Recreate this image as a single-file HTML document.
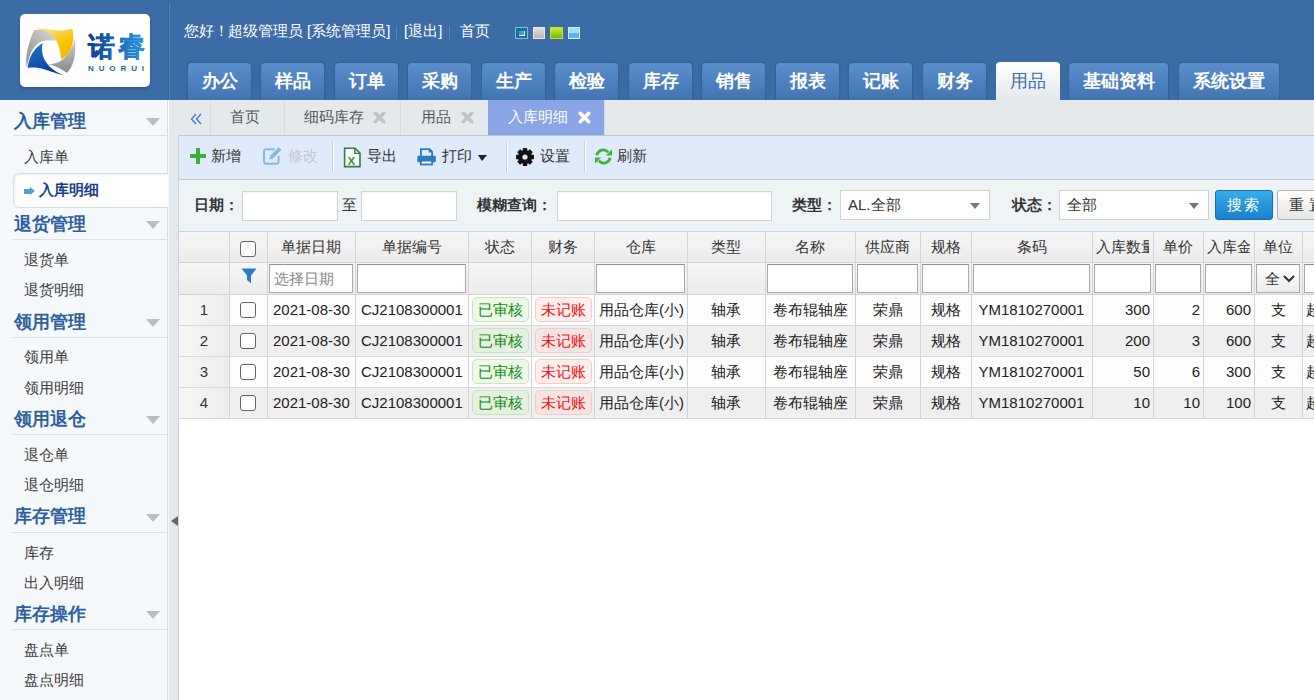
<!DOCTYPE html>
<html><head><meta charset="utf-8">
<style>
*{margin:0;padding:0;box-sizing:border-box;}
html,body{width:1314px;height:700px;overflow:hidden;font-family:"Liberation Sans",sans-serif;font-size:14px;color:#333;background:#fff;}
#hdr{position:absolute;left:0;top:0;width:1314px;height:100px;background:#3b6ca5;}
#logo{position:absolute;left:20px;top:14px;width:130px;height:73px;background:#fff;border-radius:5px;box-shadow:0 2px 3px rgba(20,40,80,.25);}
#vsep{position:absolute;left:168px;top:3px;width:2px;height:97px;border-left:1px solid #34659c;border-right:1px solid #5086c0;}
.gt{position:absolute;top:22px;color:#fff;font-size:15px;white-space:nowrap;line-height:18px;}
.gsep{position:absolute;top:26px;width:1px;height:14px;background:#5283bd;}
.sq{position:absolute;top:27px;width:12px;height:12px;}
.navt{position:absolute;top:63px;height:37px;border-radius:4px 4px 0 0;background:linear-gradient(#5a8fcc,#4174b0);color:#fff;font-weight:bold;font-size:18px;text-align:center;line-height:36px;box-shadow:0 0 2px rgba(10,30,70,.45);}
.navt.act{top:62px;height:38px;line-height:38px;background:linear-gradient(#fff,#e4e9ec);color:#3b6eaa;font-weight:normal;box-shadow:none;}
#side{position:absolute;left:0;top:100px;width:168px;height:600px;background:#f6f9fb;border-right:1px solid #d3dee6;}
.sh{position:absolute;left:14px;color:#2f609e;font-weight:bold;font-size:18px;line-height:20px;}
.sl{position:absolute;left:13px;width:155px;height:1px;background:#d7e2ea;}
.tri{position:absolute;left:146px;width:0;height:0;border-left:7px solid transparent;border-right:7px solid transparent;border-top:8px solid #b3c0c8;}
.si{position:absolute;left:24px;color:#3c3c3c;font-size:15px;line-height:18px;}
#selbox{position:absolute;left:13px;top:73px;width:160px;height:35px;background:#fff;border:1px solid #d5dfe8;border-radius:6px;box-shadow:inset 1px 1px 2px rgba(0,0,0,.08);}
.arr{position:absolute;left:10px;top:15px;width:6px;height:5px;background:#55a0d0;}
.arr:after{content:"";position:absolute;left:6px;top:-2px;border-left:5px solid #55a0d0;border-top:4.5px solid transparent;border-bottom:4.5px solid transparent;}
.selt{position:absolute;left:25px;top:7px;color:#1d3e8e;font-weight:bold;font-size:15px;line-height:18px;}
#split{position:absolute;left:168px;top:135px;width:11px;height:565px;background:#e2e8eb;border-left:1px solid #f2f6f8;border-right:1px solid #c8d5de;}
#splarr{position:absolute;left:171px;top:516px;border-right:7px solid #666;border-top:5.5px solid transparent;border-bottom:5.5px solid transparent;}
#tabbar{position:absolute;left:169px;top:100px;width:1145px;height:35px;background:#e4eaec;}
.tab{position:absolute;top:0;height:35px;line-height:34px;color:#555;font-size:15px;border-left:1px solid #d6dcdf;white-space:nowrap;}
.tab.act{background:#8aa6e6;color:#fff;border-left:none;}
.x{position:absolute;top:10.5px;width:13px;height:13px;line-height:0;}
#tool{position:absolute;left:179px;top:135px;width:1135px;height:45px;background:#dfeafb;border-top:1px solid #b9c9d9;border-bottom:1px solid #c8c8c8;}
.tt{position:absolute;top:11px;font-size:15px;line-height:18px;color:#333;white-space:nowrap;}
.tsep{position:absolute;top:6px;width:2px;height:30px;border-left:1px solid #c5cfd8;border-right:1px solid #fff;}
#srch{position:absolute;left:179px;top:180px;width:1135px;height:51px;background:#eef3f6;}
.lbl{position:absolute;top:196px;font-weight:bold;color:#333;font-size:15px;line-height:18px;white-space:nowrap;}
.inp{position:absolute;background:#fff;border:1px solid #cfd3d6;box-shadow:inset 0 1px 2px rgba(0,0,0,.06);}
.sel{position:absolute;top:190px;height:30px;background:#fff;border:1px solid #cfd3d6;font-size:15px;line-height:28px;padding-left:7px;color:#333;}
.sel:after{content:"";position:absolute;right:9px;top:12px;border-top:6px solid #777;border-left:5px solid transparent;border-right:5px solid transparent;}
.btn{position:absolute;top:190px;height:30px;border-radius:3px;font-size:15px;line-height:28px;text-align:center;letter-spacing:2px;}
#grid{position:absolute;left:179px;top:232px;width:1135px;height:468px;background:#fff;}
.hrow{position:absolute;left:0;height:31px;width:1135px;background:linear-gradient(#f7f7f7,#ebebeb);border-top:1px solid #d9dde0;}
.c{position:absolute;top:0;height:100%;border-right:1px solid #d4d4d4;font-size:15px;white-space:nowrap;overflow:hidden;text-align:center;}
.row{position:absolute;left:0;height:31px;width:1135px;border-bottom:1px solid #d9d9d9;}
.row .c{line-height:30px;color:#222;}
.ck{position:absolute;left:11px;width:16px;height:16px;border:1px solid #666;border-radius:3px;background:#fff;}
.fi{position:absolute;top:1px;height:29px;background:#fff;border:1px solid #a9a9a9;border-top-color:#8f8f8f;}
.bg{display:inline-block;height:25px;line-height:23px;padding:0 5px;margin-left:2px;border-radius:5px;font-size:15px;vertical-align:top;margin-top:2px;}
.ok{border:1px solid #c6e6bf;background:rgba(215,242,205,.4);color:#0d8a0d;}
.no{border:1px solid #f7c9c9;background:rgba(255,210,210,.35);color:#f21010;}
</style></head><body>
<div id="hdr">
  <div id="logo">
    <svg width="130" height="73" viewBox="0 0 130 73">
      <defs>
        <linearGradient id="gy" x1="0" y1="0" x2="0.6" y2="1"><stop offset="0" stop-color="#fde9a0"/><stop offset="0.7" stop-color="#f7c200"/><stop offset="1" stop-color="#f5b800"/></linearGradient>
        <linearGradient id="gg" x1="1" y1="0" x2="0" y2="1"><stop offset="0" stop-color="#dcdcdc"/><stop offset="1" stop-color="#8a8a8a"/></linearGradient>
        <linearGradient id="gg2" x1="0" y1="0" x2="0" y2="1"><stop offset="0" stop-color="#d0d0d0"/><stop offset="1" stop-color="#8a8a8a"/></linearGradient>
        <linearGradient id="gb" x1="0" y1="0" x2="0.5" y2="1"><stop offset="0" stop-color="#1f7ad0"/><stop offset="1" stop-color="#083f98"/></linearGradient>
        <linearGradient id="gt" x1="0" y1="0" x2="1" y2="0"><stop offset="0" stop-color="#0d3d9a"/><stop offset="1" stop-color="#2a9be0"/></linearGradient>
      </defs>
      <path d="M14.4 16 C20 15.6 24 15.8 28 17.5 C32 19.5 35 23 37.2 26.8 C32 26.5 26 26 22 27.2 C17 29 13 34 10.5 40 C8.5 45 7.5 50 6.8 53.2 C5.5 45 7 36 9.5 28 C11 23 12.5 19 14.4 16 Z" fill="url(#gg)"/>
      <path d="M14.4 14 C24 14.5 32 16 40 16.5 C45 16.8 49 15.5 52.4 14.8 C53.8 22 53.5 30 50.5 36 C48 40.5 45 43.5 41.2 45.2 C40.5 38 39 31 36 25.5 C32 19 24 15.5 14.4 14 Z" fill="url(#gy)"/>
      <path d="M22.8 29.2 C17 32 12.5 38 10 44 C8.8 48 8 51.5 7.6 54 C13 53 18 53.5 25 55.5 C32 58 38 60 43.6 61.2 C36 58 30 54 26 48 C22 42 21 35 22.8 29.2 Z" fill="url(#gb)"/>
      <path d="M54.8 24.4 C56 33 55.5 42 53 49 C51 54 49 57 46.8 58.8 C43 56 38 53 33 51.5 C30 50.8 28 50.8 26 50.8 C33 50 38 49 42 46 C48 41.5 53 33 54.8 24.4 Z" fill="url(#gg2)"/>
      <text x="68" y="42" font-size="27" font-weight="900" fill="url(#gt)" stroke="url(#gt)" stroke-width="0.35" letter-spacing="3">诺睿</text>
      <text x="68" y="57" font-size="8" font-weight="bold" fill="#1c5fb8" letter-spacing="4.9">NUORUI</text>
    </svg>
  </div>
  <div id="vsep"></div>
  <div class="gt" style="left:184px">您好！</div>
  <div class="gt" style="left:228px">超级管理员</div>
  <div class="gt" style="left:307px">[系统管理员]</div>
  <div class="gsep" style="left:396px"></div>
  <div class="gt" style="left:404px">[退出]</div>
  <div class="gsep" style="left:449px"></div>
  <div class="gt" style="left:460px">首页</div>
  <div class="sq" style="left:515px;width:13px;background:#1b6d9d;border:1px solid #86bcd6;"><div style="position:absolute;left:3px;top:3px;width:6px;height:5px;background:#39a3d6;border-right:1px solid #fff;border-bottom:1px solid #fff;"></div></div>
  <div class="sq" style="left:533px;width:12px;background:linear-gradient(#e2e3e5,#b3b4b6);border:1px solid #efe6df;"></div>
  <div class="sq" style="left:550px;width:13px;background:linear-gradient(#c9ee33,#76b603);border:1px solid #c4e040;"></div>
  <div class="sq" style="left:568px;width:12px;background:linear-gradient(#a2dcf8 45%,#5cb5ea 55%);border:1px solid #c9f1ff;"></div>
  <div class="navt" style="left:188px;width:63px">办公</div>
  <div class="navt" style="left:261px;width:63px">样品</div>
  <div class="navt" style="left:335px;width:63px">订单</div>
  <div class="navt" style="left:408px;width:63px">采购</div>
  <div class="navt" style="left:482px;width:63px">生产</div>
  <div class="navt" style="left:555px;width:63px">检验</div>
  <div class="navt" style="left:629px;width:63px">库存</div>
  <div class="navt" style="left:702px;width:63px">销售</div>
  <div class="navt" style="left:776px;width:63px">报表</div>
  <div class="navt" style="left:849px;width:63px">记账</div>
  <div class="navt" style="left:923px;width:63px">财务</div>
  <div class="navt act" style="left:996px;width:64px">用品</div>
  <div class="navt" style="left:1069px;width:99px">基础资料</div>
  <div class="navt" style="left:1179px;width:100px">系统设置</div>
</div>
<div id="side">
  <div class="sh" style="top:11px">入库管理</div><div class="tri" style="top:18px"></div><div class="sl" style="top:35px"></div>
  <div class="si" style="top:48px">入库单</div>
  <div id="selbox"><span class="arr"></span><span class="selt">入库明细</span></div>
  <div class="sh" style="top:114px">退货管理</div><div class="tri" style="top:121px"></div><div class="sl" style="top:139px"></div>
  <div class="si" style="top:151px">退货单</div>
  <div class="si" style="top:181px">退货明细</div>
  <div class="sh" style="top:212px">领用管理</div><div class="tri" style="top:219px"></div><div class="sl" style="top:237px"></div>
  <div class="si" style="top:248px">领用单</div>
  <div class="si" style="top:279px">领用明细</div>
  <div class="sh" style="top:309px">领用退仓</div><div class="tri" style="top:316px"></div><div class="sl" style="top:334px"></div>
  <div class="si" style="top:346px">退仓单</div>
  <div class="si" style="top:376px">退仓明细</div>
  <div class="sh" style="top:406px">库存管理</div><div class="tri" style="top:414px"></div><div class="sl" style="top:432px"></div>
  <div class="si" style="top:444px">库存</div>
  <div class="si" style="top:474px">出入明细</div>
  <div class="sh" style="top:504px">库存操作</div><div class="tri" style="top:511px"></div><div class="sl" style="top:529px"></div>
  <div class="si" style="top:541px">盘点单</div>
  <div class="si" style="top:571px">盘点明细</div>
</div>
<div id="split"></div>
<div id="splarr"></div>
<div id="tabbar">
  <svg style="position:absolute;left:21px;top:13px" width="12" height="12" viewBox="0 0 12 12"><path d="M6 1L1.5 6L6 11M11 1L6.5 6L11 11" fill="none" stroke="#3b7cc9" stroke-width="1.4"/></svg>
  <div class="tab" style="left:41px;width:74px;"><span style="position:absolute;left:19px;">首页</span></div>
  <div class="tab" style="left:115px;width:116px;"><span style="position:absolute;left:19px;">细码库存</span><span class="x" style="left:88px"><svg width="13" height="13" viewBox="0 0 13 13"><path d="M2.3 2.3 L10.7 10.7 M10.7 2.3 L2.3 10.7" stroke="#c3c3c3" stroke-width="3.6" stroke-linecap="round"/></svg></span></div>
  <div class="tab" style="left:231px;width:88px;"><span style="position:absolute;left:20px;">用品</span><span class="x" style="left:60px"><svg width="13" height="13" viewBox="0 0 13 13"><path d="M2.3 2.3 L10.7 10.7 M10.7 2.3 L2.3 10.7" stroke="#c3c3c3" stroke-width="3.6" stroke-linecap="round"/></svg></span></div>
  <div class="tab act" style="left:319px;width:116px;"><span style="position:absolute;left:20px;">入库明细</span><span class="x" style="left:90px"><svg width="13" height="13" viewBox="0 0 13 13"><path d="M2.3 2.3 L10.7 10.7 M10.7 2.3 L2.3 10.7" stroke="#fff" stroke-width="3.6" stroke-linecap="round"/></svg></span></div>
  <div style="position:absolute;left:435px;top:0;width:1px;height:35px;background:#d6dcdf"></div>
</div>
<div id="tool">
  <svg style="position:absolute;left:11px;top:12px" width="16" height="16" viewBox="0 0 16 16"><path d="M6 0h4v6h6v4h-6v6h-4v-6h-6v-4h6z" fill="#3fae3a"/></svg>
  <div class="tt" style="left:32px">新增</div>
  <svg style="position:absolute;left:83px;top:10px" width="21" height="19" viewBox="0 0 21 19"><path d="M12.5 3.2H4.2A2.2 2.2 0 0 0 2 5.4v10.2A2.2 2.2 0 0 0 4.2 17.8h10.2a2.2 2.2 0 0 0 2.2-2.2V10" fill="none" stroke="#86b8e0" stroke-width="1.9"/><path d="M16.8 1.2l2.6 2.6-8.6 8.6-3.6 1 1-3.6z" fill="#86b8e0"/></svg>
  <div class="tt" style="left:109px;color:#c4c8cc">修改</div>
  <div class="tsep" style="left:153px"></div>
  <svg style="position:absolute;left:164px;top:11px" width="19" height="21" viewBox="0 0 19 21"><path d="M1.6 1.2h10.4l5 5v13.4H1.6z" fill="#fff" stroke="#2e7d3e" stroke-width="1.6"/><path d="M11.8 1.2v5.2h5.2" fill="none" stroke="#2e7d3e" stroke-width="1.4"/><text x="4.6" y="17.6" font-size="11.5" font-family="Liberation Sans" font-weight="bold" fill="#3f8f3a">X</text></svg>
  <div class="tt" style="left:188px">导出</div>
  <svg style="position:absolute;left:238px;top:11px" width="19" height="19" viewBox="0 0 19 19"><path d="M3.9 10V2.1h8.6l2.6 2.6V10" fill="none" stroke="#2d7cc2" stroke-width="1.8"/><path d="M11.8 1.5v4h4z" fill="#2d7cc2"/><rect x="0.3" y="8.7" width="18.5" height="6.6" rx="1.3" fill="#2d7cc2"/><rect x="3.9" y="13.6" width="11.2" height="3.9" fill="#fff" stroke="#2d7cc2" stroke-width="1.8"/></svg>
  <div class="tt" style="left:263px">打印</div>
  <div style="position:absolute;left:299px;top:19px;border-top:6px solid #222;border-left:4px solid transparent;border-right:5px solid transparent;"></div>
  <div class="tsep" style="left:327px"></div>
  <svg style="position:absolute;left:337px;top:12px" width="18" height="18" viewBox="0 0 18 18"><g fill="#111"><circle cx="9" cy="9" r="7"/><rect x="6.8" y="0" width="4.4" height="18" rx="0.8" transform="rotate(0 9 9)"/><rect x="6.8" y="0" width="4.4" height="18" rx="0.8" transform="rotate(45 9 9)"/><rect x="6.8" y="0" width="4.4" height="18" rx="0.8" transform="rotate(90 9 9)"/><rect x="6.8" y="0" width="4.4" height="18" rx="0.8" transform="rotate(135 9 9)"/></g><circle cx="9" cy="9" r="2.6" fill="#deeafa"/></svg>
  <div class="tt" style="left:361px">设置</div>
  <div class="tsep" style="left:405px"></div>
  <svg style="position:absolute;left:415px;top:11px" width="19" height="19" viewBox="0 0 19 19"><path d="M2.8 8.2A6.6 6.6 0 0 1 14.2 5.2" fill="none" stroke="#3cb43c" stroke-width="2.8"/><path d="M18 2.2V8.4H11.8z" fill="#3cb43c"/><path d="M16.2 10.8A6.6 6.6 0 0 1 4.8 13.8" fill="none" stroke="#3cb43c" stroke-width="2.8"/><path d="M1 10.6H7.2L1 16.8z" fill="#3cb43c"/></svg>
  <div class="tt" style="left:438px">刷新</div>
</div>
<div id="srch"></div>
<div class="lbl" style="left:194px">日期：</div>
<div class="inp" style="left:242px;top:191px;width:96px;height:30px"></div>
<div class="lbl" style="left:342px;font-weight:normal">至</div>
<div class="inp" style="left:361px;top:191px;width:96px;height:30px"></div>
<div class="lbl" style="left:477px">模糊查询：</div>
<div class="inp" style="left:557px;top:191px;width:215px;height:30px"></div>
<div class="lbl" style="left:792px">类型：</div>
<div class="sel" style="left:840px;width:150px">AL.全部</div>
<div class="lbl" style="left:1012px">状态：</div>
<div class="sel" style="left:1059px;width:150px">全部</div>
<div class="btn" style="left:1215px;width:58px;background:linear-gradient(#36aee8,#1b7fcb);border:1px solid #1a6db4;color:#fff">搜索</div>
<div class="btn" style="left:1277px;width:60px;background:linear-gradient(#fff,#e6e6e6);border:1px solid #b5b5b5;color:#333;text-align:left;padding-left:11px;letter-spacing:5px">重置</div>
<div id="grid" style="top:231px">
<div class="hrow" style="top:0;height:32px;border-top:1px solid #cdd3d8;border-bottom:1px solid #d4d4d4">
<div class="c" style="left:0px;width:51px;line-height:30px;color:#333;"></div>
<div class="c" style="left:50px;width:39px;line-height:30px;color:#333;"><div class="ck" style="top:9px"></div></div>
<div class="c" style="left:88px;width:89px;line-height:30px;color:#333;">单据日期</div>
<div class="c" style="left:176px;width:114px;line-height:30px;color:#333;">单据编号</div>
<div class="c" style="left:289px;width:64px;line-height:30px;color:#333;">状态</div>
<div class="c" style="left:352px;width:64px;line-height:30px;color:#333;">财务</div>
<div class="c" style="left:415px;width:94px;line-height:30px;color:#333;">仓库</div>
<div class="c" style="left:508px;width:79px;line-height:30px;color:#333;">类型</div>
<div class="c" style="left:586px;width:91px;line-height:30px;color:#333;">名称</div>
<div class="c" style="left:676px;width:66px;line-height:30px;color:#333;">供应商</div>
<div class="c" style="left:741px;width:52px;line-height:30px;color:#333;">规格</div>
<div class="c" style="left:792px;width:122px;line-height:30px;color:#333;">条码</div>
<div class="c" style="left:913px;width:62px;line-height:30px;color:#333;text-align:left;"><div style="position:absolute;left:4px;right:4px;top:0;overflow:hidden">入库数量</div></div>
<div class="c" style="left:974px;width:51px;line-height:30px;color:#333;">单价</div>
<div class="c" style="left:1024px;width:52px;line-height:30px;color:#333;text-align:left;"><div style="position:absolute;left:4px;right:4px;top:0;overflow:hidden">入库金额</div></div>
<div class="c" style="left:1075px;width:49px;line-height:30px;color:#333;">单位</div>
<div class="c" style="left:1123px;width:99px;line-height:30px;color:#333;"></div>
</div>
<div class="hrow" style="top:32px;height:32px;border-top:none;border-bottom:1px solid #d4d4d4">
<div class="c" style="left:0px;width:51px;"></div>
<div class="c" style="left:50px;width:39px;"><svg style="position:absolute;left:12px;top:5px" width="16" height="16" viewBox="0 0 16 16"><path d="M0.5 0.5h15L10 7.5v8L6 12V7.5z" fill="#2d7cc2"/></svg></div>
<div class="c" style="left:88px;width:89px;"><div class="fi" style="left:2px;width:84px;text-align:left;padding-left:4px;color:#888;line-height:27px">选择日期</div></div>
<div class="c" style="left:176px;width:114px;"><div class="fi" style="left:2px;width:109px"></div></div>
<div class="c" style="left:289px;width:64px;"></div>
<div class="c" style="left:352px;width:64px;"></div>
<div class="c" style="left:415px;width:94px;"><div class="fi" style="left:2px;width:89px"></div></div>
<div class="c" style="left:508px;width:79px;"></div>
<div class="c" style="left:586px;width:91px;"><div class="fi" style="left:2px;width:86px"></div></div>
<div class="c" style="left:676px;width:66px;"><div class="fi" style="left:2px;width:61px"></div></div>
<div class="c" style="left:741px;width:52px;"><div class="fi" style="left:2px;width:47px"></div></div>
<div class="c" style="left:792px;width:122px;"><div class="fi" style="left:2px;width:117px"></div></div>
<div class="c" style="left:913px;width:62px;"><div class="fi" style="left:2px;width:57px"></div></div>
<div class="c" style="left:974px;width:51px;"><div class="fi" style="left:2px;width:46px"></div></div>
<div class="c" style="left:1024px;width:52px;"><div class="fi" style="left:2px;width:47px"></div></div>
<div class="c" style="left:1075px;width:49px;"><div class="fi" style="left:2px;width:44px;background:linear-gradient(#fff,#ececec);line-height:27px;color:#333;text-align:left;padding-left:8px">全<svg style="position:absolute;left:26px;top:10px" width="12" height="8" viewBox="0 0 12 8"><path d="M1 1l5 5 5-5" fill="none" stroke="#333" stroke-width="2.2"/></svg></div></div>
<div class="c" style="left:1123px;width:99px;"><div class="fi" style="left:2px;width:94px"></div></div>
</div>
<div class="row" style="top:64px;background:#fdfdfd">
<div class="c" style="left:0px;width:51px;background:linear-gradient(90deg,#f7f7f7,#ececec);color:#333;">1</div>
<div class="c" style="left:50px;width:39px;"><div class="ck" style="top:7px"></div></div>
<div class="c" style="left:88px;width:89px;text-align:left;padding-left:6px;">2021-08-30</div>
<div class="c" style="left:176px;width:114px;text-align:left;padding-left:6px;">CJ2108300001</div>
<div class="c" style="left:289px;width:64px;"><span class="bg ok">已审核</span></div>
<div class="c" style="left:352px;width:64px;"><span class="bg no">未记账</span></div>
<div class="c" style="left:415px;width:94px;text-align:left;padding-left:5px;">用品仓库(小)</div>
<div class="c" style="left:508px;width:79px;">轴承</div>
<div class="c" style="left:586px;width:91px;">卷布辊轴座</div>
<div class="c" style="left:676px;width:66px;">荣鼎</div>
<div class="c" style="left:741px;width:52px;">规格</div>
<div class="c" style="left:792px;width:122px;">YM1810270001</div>
<div class="c" style="left:913px;width:62px;text-align:right;padding-right:3px;">300</div>
<div class="c" style="left:974px;width:51px;text-align:right;padding-right:3px;">2</div>
<div class="c" style="left:1024px;width:52px;text-align:right;padding-right:3px;">600</div>
<div class="c" style="left:1075px;width:49px;">支</div>
<div class="c" style="left:1123px;width:99px;text-align:left;padding-left:4px;">超</div>
</div>
<div class="row" style="top:95px;background:#efefef">
<div class="c" style="left:0px;width:51px;background:linear-gradient(90deg,#f7f7f7,#ececec);color:#333;">2</div>
<div class="c" style="left:50px;width:39px;"><div class="ck" style="top:7px"></div></div>
<div class="c" style="left:88px;width:89px;text-align:left;padding-left:6px;">2021-08-30</div>
<div class="c" style="left:176px;width:114px;text-align:left;padding-left:6px;">CJ2108300001</div>
<div class="c" style="left:289px;width:64px;"><span class="bg ok">已审核</span></div>
<div class="c" style="left:352px;width:64px;"><span class="bg no">未记账</span></div>
<div class="c" style="left:415px;width:94px;text-align:left;padding-left:5px;">用品仓库(小)</div>
<div class="c" style="left:508px;width:79px;">轴承</div>
<div class="c" style="left:586px;width:91px;">卷布辊轴座</div>
<div class="c" style="left:676px;width:66px;">荣鼎</div>
<div class="c" style="left:741px;width:52px;">规格</div>
<div class="c" style="left:792px;width:122px;">YM1810270001</div>
<div class="c" style="left:913px;width:62px;text-align:right;padding-right:3px;">200</div>
<div class="c" style="left:974px;width:51px;text-align:right;padding-right:3px;">3</div>
<div class="c" style="left:1024px;width:52px;text-align:right;padding-right:3px;">600</div>
<div class="c" style="left:1075px;width:49px;">支</div>
<div class="c" style="left:1123px;width:99px;text-align:left;padding-left:4px;">超</div>
</div>
<div class="row" style="top:126px;background:#fdfdfd">
<div class="c" style="left:0px;width:51px;background:linear-gradient(90deg,#f7f7f7,#ececec);color:#333;">3</div>
<div class="c" style="left:50px;width:39px;"><div class="ck" style="top:7px"></div></div>
<div class="c" style="left:88px;width:89px;text-align:left;padding-left:6px;">2021-08-30</div>
<div class="c" style="left:176px;width:114px;text-align:left;padding-left:6px;">CJ2108300001</div>
<div class="c" style="left:289px;width:64px;"><span class="bg ok">已审核</span></div>
<div class="c" style="left:352px;width:64px;"><span class="bg no">未记账</span></div>
<div class="c" style="left:415px;width:94px;text-align:left;padding-left:5px;">用品仓库(小)</div>
<div class="c" style="left:508px;width:79px;">轴承</div>
<div class="c" style="left:586px;width:91px;">卷布辊轴座</div>
<div class="c" style="left:676px;width:66px;">荣鼎</div>
<div class="c" style="left:741px;width:52px;">规格</div>
<div class="c" style="left:792px;width:122px;">YM1810270001</div>
<div class="c" style="left:913px;width:62px;text-align:right;padding-right:3px;">50</div>
<div class="c" style="left:974px;width:51px;text-align:right;padding-right:3px;">6</div>
<div class="c" style="left:1024px;width:52px;text-align:right;padding-right:3px;">300</div>
<div class="c" style="left:1075px;width:49px;">支</div>
<div class="c" style="left:1123px;width:99px;text-align:left;padding-left:4px;">超</div>
</div>
<div class="row" style="top:157px;background:#efefef">
<div class="c" style="left:0px;width:51px;background:linear-gradient(90deg,#f7f7f7,#ececec);color:#333;">4</div>
<div class="c" style="left:50px;width:39px;"><div class="ck" style="top:7px"></div></div>
<div class="c" style="left:88px;width:89px;text-align:left;padding-left:6px;">2021-08-30</div>
<div class="c" style="left:176px;width:114px;text-align:left;padding-left:6px;">CJ2108300001</div>
<div class="c" style="left:289px;width:64px;"><span class="bg ok">已审核</span></div>
<div class="c" style="left:352px;width:64px;"><span class="bg no">未记账</span></div>
<div class="c" style="left:415px;width:94px;text-align:left;padding-left:5px;">用品仓库(小)</div>
<div class="c" style="left:508px;width:79px;">轴承</div>
<div class="c" style="left:586px;width:91px;">卷布辊轴座</div>
<div class="c" style="left:676px;width:66px;">荣鼎</div>
<div class="c" style="left:741px;width:52px;">规格</div>
<div class="c" style="left:792px;width:122px;">YM1810270001</div>
<div class="c" style="left:913px;width:62px;text-align:right;padding-right:3px;">10</div>
<div class="c" style="left:974px;width:51px;text-align:right;padding-right:3px;">10</div>
<div class="c" style="left:1024px;width:52px;text-align:right;padding-right:3px;">100</div>
<div class="c" style="left:1075px;width:49px;">支</div>
<div class="c" style="left:1123px;width:99px;text-align:left;padding-left:4px;">超</div>
</div>
</div>
</body></html>
